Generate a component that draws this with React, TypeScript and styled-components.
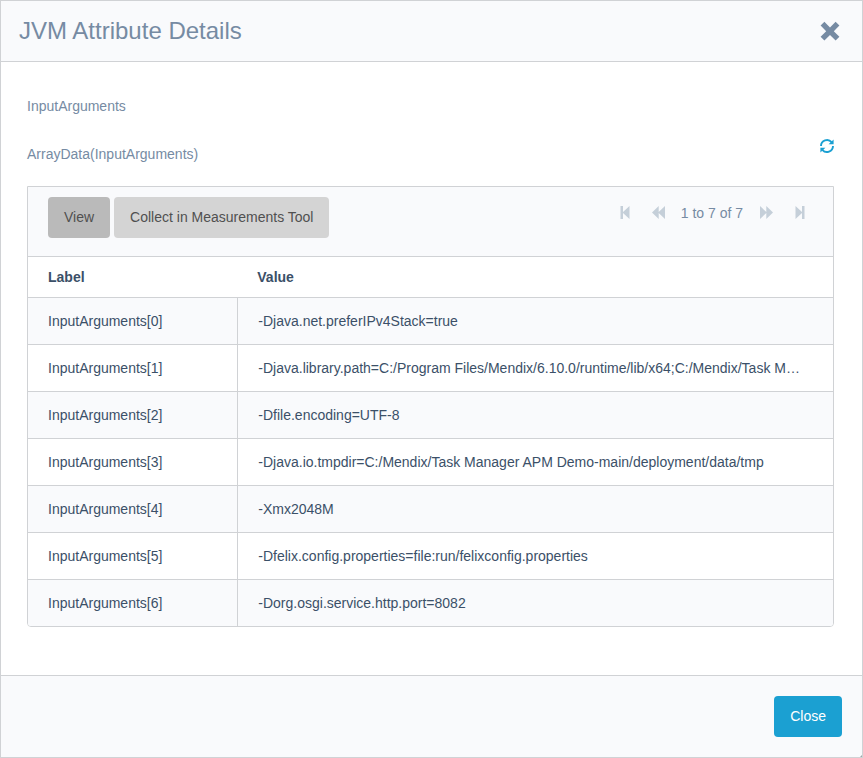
import React from "react";
import styled, { createGlobalStyle, css } from "styled-components";

const color = {
  line: "#d0d2d5",
  panel: "#f9fafc",
  muted: "#768ba3",
  text: "#3b5068",
  accent: "#1ba0d2",
  disabled: "#c5cfd9",
};

const GlobalStyle = createGlobalStyle`
  *, *::before, *::after { box-sizing: border-box; }
  body {
    margin: 0;
    background: #fff;
    color: ${color.text};
    font-family: "Liberation Sans", Arial, sans-serif;
    font-size: 14px;
    line-height: 20px;
  }
`;

const Dialog = styled.section`
  position: relative;
  display: flex;
  flex-direction: column;
  min-height: 100vh;
  border: 1px solid ${color.line};
  background: #fff;
`;

const ResizeGrip = styled.span`
  position: absolute;
  right: 0;
  bottom: 0;
  border: 1px solid transparent;
  border-right-color: #a0a4a8;
  border-bottom-color: #a0a4a8;
  cursor: nwse-resize;
`;

const Header = styled.header`
  display: flex;
  align-items: center;
  justify-content: space-between;
  padding: 15px 22px 15px 18px;
  border-bottom: 1px solid ${color.line};
  background: ${color.panel};
`;

const Title = styled.h1`
  margin: 0;
  color: ${color.muted};
  font-size: 24px;
  font-weight: 400;
  line-height: 30px;
`;

const IconButton = styled.button<{ $tone: string }>`
  display: flex;
  padding: 0;
  border: 0;
  background: none;
  color: ${(p) => p.$tone};
  cursor: pointer;

  &:disabled {
    cursor: default;
  }
`;

const Body = styled.main`
  flex: 1;
  padding: 34px 28px 48px 26px;
`;

const FieldText = styled.p`
  margin: 0 0 28px;
  color: ${color.muted};
`;

const ArrayHeading = styled.div`
  display: flex;
  align-items: flex-start;
  justify-content: space-between;
  padding-bottom: 22px;

  ${FieldText} {
    margin: 0;
  }
  ${IconButton} {
    margin-top: -5px;
  }
`;

const Grid = styled.div`
  border: 1px solid ${color.line};
  border-radius: 0 0 4px 4px;
  overflow: hidden;
`;

const Toolbar = styled.div`
  display: flex;
  align-items: flex-start;
  justify-content: space-between;
  padding: 10px 28px 18px 20px;
  border-bottom: 1px solid ${color.line};
  background: ${color.panel};
`;

const ButtonGroup = styled.div`
  display: flex;
  gap: 4px;
`;

const variants = {
  active: css`
    background: #bababa;
    color: #505050;
  `,
  plain: css`
    background: #d4d4d4;
    color: #505050;
  `,
  primary: css`
    background: ${color.accent};
    color: #fff;
  `,
};

const Button = styled.button<{ $variant: keyof typeof variants }>`
  padding: 10px 16px 11px;
  border: 0;
  border-radius: 4px;
  font: inherit;
  cursor: pointer;
  ${(p) => variants[p.$variant]}
`;

const Pager = styled.nav`
  display: flex;
  align-items: center;
  gap: 22px;
  padding-top: 6px;
  color: ${color.muted};
`;

const PagerStatus = styled.span`
  margin: 0 -5px -1px -6px;
  white-space: nowrap;
`;

const Table = styled.table`
  width: 100%;
  table-layout: fixed;
  border-collapse: separate;
  border-spacing: 0;
`;

const LabelColumn = styled.col`
  width: 26%;
`;

const HeadCell = styled.th`
  padding: 10px 20px;
  text-align: left;
  font-weight: 700;
`;

const Cell = styled.td`
  padding: 13px 28px 13px 20px;
  border-top: 1px solid ${color.line};
  overflow: hidden;
  text-overflow: ellipsis;
  white-space: nowrap;

  & + & {
    border-left: 1px solid ${color.line};
  }
`;

const Row = styled.tr`
  &:nth-child(odd) {
    background: ${color.panel};
  }
`;

const Footer = styled.footer`
  display: flex;
  justify-content: flex-end;
  padding: 20px;
  border-top: 1px solid ${color.line};
  background: ${color.panel};
`;

const CloseIcon = () => (
  <svg width="20" height="20" viewBox="0 0 20 20" fill="currentColor" aria-hidden="true">
    <path d="M4.4 0.8 10 6.4l5.6-5.6L19.4 4.6 13.8 10.2l5.6 5.6-3.8 3.8L10 14l-5.6 5.6-3.8-3.8L6.2 10.2 0.6 4.6Z" />
  </svg>
);

const RefreshIcon = () => (
  <svg width="14" height="14" viewBox="0 0 14 14" aria-hidden="true">
    <path
      d="M1 7A6 6 0 0 1 11.6 3.2M13 7A6 6 0 0 1 2.4 10.8"
      fill="none"
      stroke="currentColor"
      strokeWidth="1.9"
    />
    <path d="M13.6 .4V5.2H8.6ZM.4 13.6V8.8H5.4Z" fill="currentColor" />
  </svg>
);

const pagerShapes = {
  first: { width: 10, d: "M.5 0H3V6L9.5 0V13L3 7V13H.5Z" },
  previous: { width: 13, d: "M6.7 0V6L13 0V13L6.7 7V13L0 6.5Z" },
  next: { width: 13, d: "M6.3 0V6L0 0V13L6.3 7V13L13 6.5Z" },
  last: { width: 10, d: "M9.5 0H7V6L.5 0V13L7 7V13H9.5Z" },
};

const pagerLabels = {
  first: "First page",
  previous: "Previous page",
  next: "Next page",
  last: "Last page",
};

function PagerButton({ kind }: { kind: keyof typeof pagerShapes }) {
  const { width, d } = pagerShapes[kind];
  return (
    <IconButton $tone={color.disabled} type="button" disabled aria-label={pagerLabels[kind]}>
      <svg width={width} height="14" viewBox={`0 0 ${width} 14`} fill="currentColor" aria-hidden="true">
        <path d={d} />
      </svg>
    </IconButton>
  );
}

const values = [
  "-Djava.net.preferIPv4Stack=true",
  "-Djava.library.path=C:/Program Files/Mendix/6.10.0/runtime/lib/x64;C:/Mendix/Task Manager APM Demo-main/deployment",
  "-Dfile.encoding=UTF-8",
  "-Djava.io.tmpdir=C:/Mendix/Task Manager APM Demo-main/deployment/data/tmp",
  "-Xmx2048M",
  "-Dfelix.config.properties=file:run/felixconfig.properties",
  "-Dorg.osgi.service.http.port=8082",
];

export default function App() {
  return (
    <>
      <GlobalStyle />
      <Dialog role="dialog" aria-labelledby="dialog-title">
        <Header>
          <Title id="dialog-title">JVM Attribute Details</Title>
          <IconButton $tone={color.muted} type="button" aria-label="Close dialog">
            <CloseIcon />
          </IconButton>
        </Header>
        <Body>
          <FieldText>InputArguments</FieldText>
          <ArrayHeading>
            <FieldText>ArrayData(InputArguments)</FieldText>
            <IconButton $tone={color.accent} type="button" aria-label="Refresh">
              <RefreshIcon />
            </IconButton>
          </ArrayHeading>
          <Grid>
            <Toolbar>
              <ButtonGroup>
                <Button $variant="active" type="button">View</Button>
                <Button $variant="plain" type="button">Collect in Measurements Tool</Button>
              </ButtonGroup>
              <Pager aria-label="Pages">
                <PagerButton kind="first" />
                <PagerButton kind="previous" />
                <PagerStatus>1 to 7 of 7</PagerStatus>
                <PagerButton kind="next" />
                <PagerButton kind="last" />
              </Pager>
            </Toolbar>
            <Table>
              <colgroup>
                <LabelColumn />
                <col />
              </colgroup>
              <thead>
                <tr>
                  <HeadCell scope="col">Label</HeadCell>
                  <HeadCell scope="col">Value</HeadCell>
                </tr>
              </thead>
              <tbody>
                {values.map((value, index) => (
                  <Row key={value}>
                    <Cell>{`InputArguments[${index}]`}</Cell>
                    <Cell>{value}</Cell>
                  </Row>
                ))}
              </tbody>
            </Table>
          </Grid>
        </Body>
        <Footer>
          <Button $variant="primary" type="button">Close</Button>
        </Footer>
        <ResizeGrip />
      </Dialog>
    </>
  );
}
